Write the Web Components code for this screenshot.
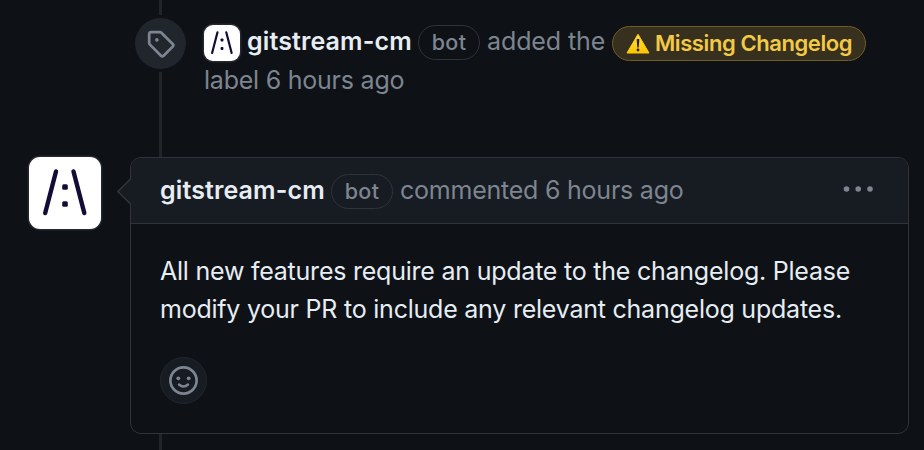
<!DOCTYPE html>
<html lang="en">
<head>
<meta charset="utf-8">
<title>Pull request timeline</title>
<style>
html,body{margin:0;height:100%;background:#0e1116;overflow:hidden}
body{font-family:Inter,"Liberation Sans",sans-serif;font-size:25px;letter-spacing:-.23px;color:#e6edf3;
--muted:#7d8590;--border:#30343a;--raised:#171b22;--canvas:#0e1116}
</style>
</head>
<body>
<pr-timeline>
  <label-event></label-event>
  <timeline-comment>
    <span>All new features require an update to the changelog. Please</span>
    <span>modify your PR to include any relevant changelog updates.</span>
  </timeline-comment>
</pr-timeline>
<script>
class Base extends HTMLElement{
  constructor(){super();this.attachShadow({mode:'open'}).innerHTML=this.constructor.html}
}
customElements.define('bot-avatar',class extends Base{
  static html=`<style>
  :host{display:block;flex:none;width:var(--size,36px);height:var(--size,36px);border-radius:var(--radius,9px);background:#fff;box-shadow:0 0 0 1.5px #24282e}
  svg{display:block;width:100%;height:100%}</style>
  <svg viewBox="0 0 72 72"><g stroke="#120c36" stroke-width="4.4" stroke-linecap="round"><path d="M27 14.5 16.2 56M44.500 14.500 55.300 56"/></g>
  <g fill="#120c36"><rect x="33.200" y="27.200" width="5.600" height="5.600" rx="1.500"/><rect x="33.200" y="44.200" width="5.600" height="5.600" rx="1.500"/></g></svg>`});
customElements.define('bot-pill',class extends Base{
  static html=`<style>
  :host{display:flex;flex:none;box-sizing:border-box;width:62px;height:35px;border:1px solid var(--border);border-radius:18px;
  align-items:center;justify-content:center;color:var(--muted);font-size:21.5px;font-weight:500;line-height:33px;letter-spacing:.3px}</style><slot></slot>`});
customElements.define('issue-label',class extends Base{
  static html=`<style>
  :host{display:flex;flex:none;box-sizing:border-box;width:254px;height:35px;border:1px solid #6f5d22;border-radius:18px;background:#38301f;
  align-items:center;padding-left:13px;gap:5px;color:#f2ca45;font-size:22px;font-weight:600;letter-spacing:-.42px;line-height:33px;white-space:nowrap}
  svg{flex:none;width:24px;height:21px}</style>
  <svg viewBox="0 0 24 21"><defs><linearGradient id="g" x2="0" y2="1"><stop stop-color="#ffe14a"/><stop offset="1" stop-color="#ffc400"/></linearGradient></defs>
  <path d="M12 1.200 23 20H1Z" fill="url(#g)" stroke="#ffca0a" stroke-linejoin="round"/><path d="M10.600 6.300q1.400-1.100 2.800 0L12.700 14.500h-1.400Z" fill="#292414"/><circle cx="12" cy="17" r="1.400" fill="#292414"/></svg><slot></slot>`});
customElements.define('label-event',class extends Base{
  static html=`<style>
  :host{display:flex;box-sizing:border-box;height:157px;padding:15px 0 0 135px;gap:18px}
  .badge{flex:none;box-sizing:border-box;width:51px;height:57px;border-block:3px solid var(--canvas)}
  .disc{width:51px;height:51px;border-radius:50%;background:#21252c;display:grid;place-items:center}
  .disc svg{width:29px;height:29px;fill:var(--muted)}
  .row{display:flex;height:48px;padding-top:10px;white-space:nowrap}
  .t{line-height:32px}.name{font-weight:600;letter-spacing:-.1px;letter-spacing:.12px;width:164px;margin:0 7px}
  .m{color:var(--muted)}.added{letter-spacing:-.1px;margin-left:7px;width:125px}
  issue-label{margin-top:1px}.second{line-height:38px;margin-top:-12px}
  </style>
  <div class="badge"><div class="disc"><svg viewBox="0 0 16 16"><path d="M1 7.775V2.750C1 1.784 1.784 1 2.750 1h5.025c.464 0 .910.184 1.238.513l6.250 6.250a1.750 1.750 0 0 1 0 2.474l-5.026 5.026a1.750 1.750 0 0 1-2.474 0l-6.250-6.250A1.752 1.752 0 0 1 1 7.775Zm1.500 0c0 .066.026.130.073.177l6.250 6.250a.250.250 0 0 0 .354 0l5.025-5.025a.250.250 0 0 0 0-.354l-6.250-6.250a.250.250 0 0 0-.177-.073H2.750a.250.250 0 0 0-.250.250ZM6 5a1 1 0 1 1 0 2 1 1 0 0 1 0-2Z"/></svg></div></div>
  <div><div class="row"><bot-avatar></bot-avatar><span class="t name">gitstream-cm</span><bot-pill>bot</bot-pill><span class="t m added">added the</span><issue-label>Missing Changelog</issue-label></div>
  <div class="m second">label 6 hours ago</div></div>`});
customElements.define('reaction-button',class extends Base{
  static html=`<style>:host{display:grid;place-items:center;box-sizing:border-box;width:47px;height:47px;border:1px solid #22262d;border-radius:50%;background:var(--raised)}
  svg{width:29px;height:29px}</style>
  <svg viewBox="0 0 29 29" fill="none" stroke="#7d8590" stroke-linecap="round"><circle cx="14.500" cy="14.500" r="13.100" stroke-width="2.700"/><path d="M10 18.500q4.500 4 9 0" stroke-width="2.500"/><g fill="#7d8590" stroke="none"><circle cx="9.300" cy="12.300" r="1.900"/><circle cx="19.700" cy="12.300" r="1.900"/></g></svg>`});
customElements.define('timeline-comment',class extends Base{
  static html=`<style>
  :host{display:flex;padding-left:29px;gap:29px}
  bot-avatar{--size:72px;--radius:11px}
  .box{box-sizing:border-box;width:779px;height:277px;border:1px solid var(--border);border-radius:11px;background:var(--canvas);position:relative}
  .head{display:flex;box-sizing:border-box;height:66px;padding:16px 0 0 29px;background:var(--raised);border-bottom:1px solid var(--border);border-radius:10px 10px 0 0;white-space:nowrap}
  .arrow{position:absolute;left:-14px;top:19px;width:16px;height:29px}
  .t{line-height:32px}.name{font-weight:600;letter-spacing:.12px;width:164px;margin-right:7px}.m{color:var(--muted);margin-left:7px}
  .dots{width:30px;height:8px;margin:11px 35.500px 0 auto}
  .body{display:flex;flex-direction:column;padding:28px 0 0 29px;line-height:38px;white-space:nowrap;font-weight:430}
  reaction-button{margin:29px 0 0 29px}
  </style>
  <bot-avatar></bot-avatar>
  <div class="box"><div class="head"><span class="t name">gitstream-cm</span><bot-pill>bot</bot-pill><span class="t m">commented 6 hours ago</span>
  <svg class="dots" viewBox="0 0 30 8" fill="#7d8590"><circle cx="3.500" cy="4" r="2.800"/><circle cx="15.200" cy="4" r="2.800"/><circle cx="27" cy="4" r="2.800"/></svg></div>
  <svg class="arrow" viewBox="0 0 16 29"><path d="M16 0 14 1.500 1 14.500 14 27.500 16 29Z" fill="#171b22"/><path d="M14 1.500 1 14.500 14 27.500" fill="none" stroke="#30343a" stroke-width="1.600"/></svg>
  <div class="body"><slot></slot></div><reaction-button></reaction-button></div>`});
customElements.define('pr-timeline',class extends Base{
  static html=`<style>:host{display:block;height:450px;overflow:hidden;background:linear-gradient(#21252a,#21252a) 159px 0/3px 100% no-repeat}</style><slot></slot>`});
</script>
</body>
</html>
